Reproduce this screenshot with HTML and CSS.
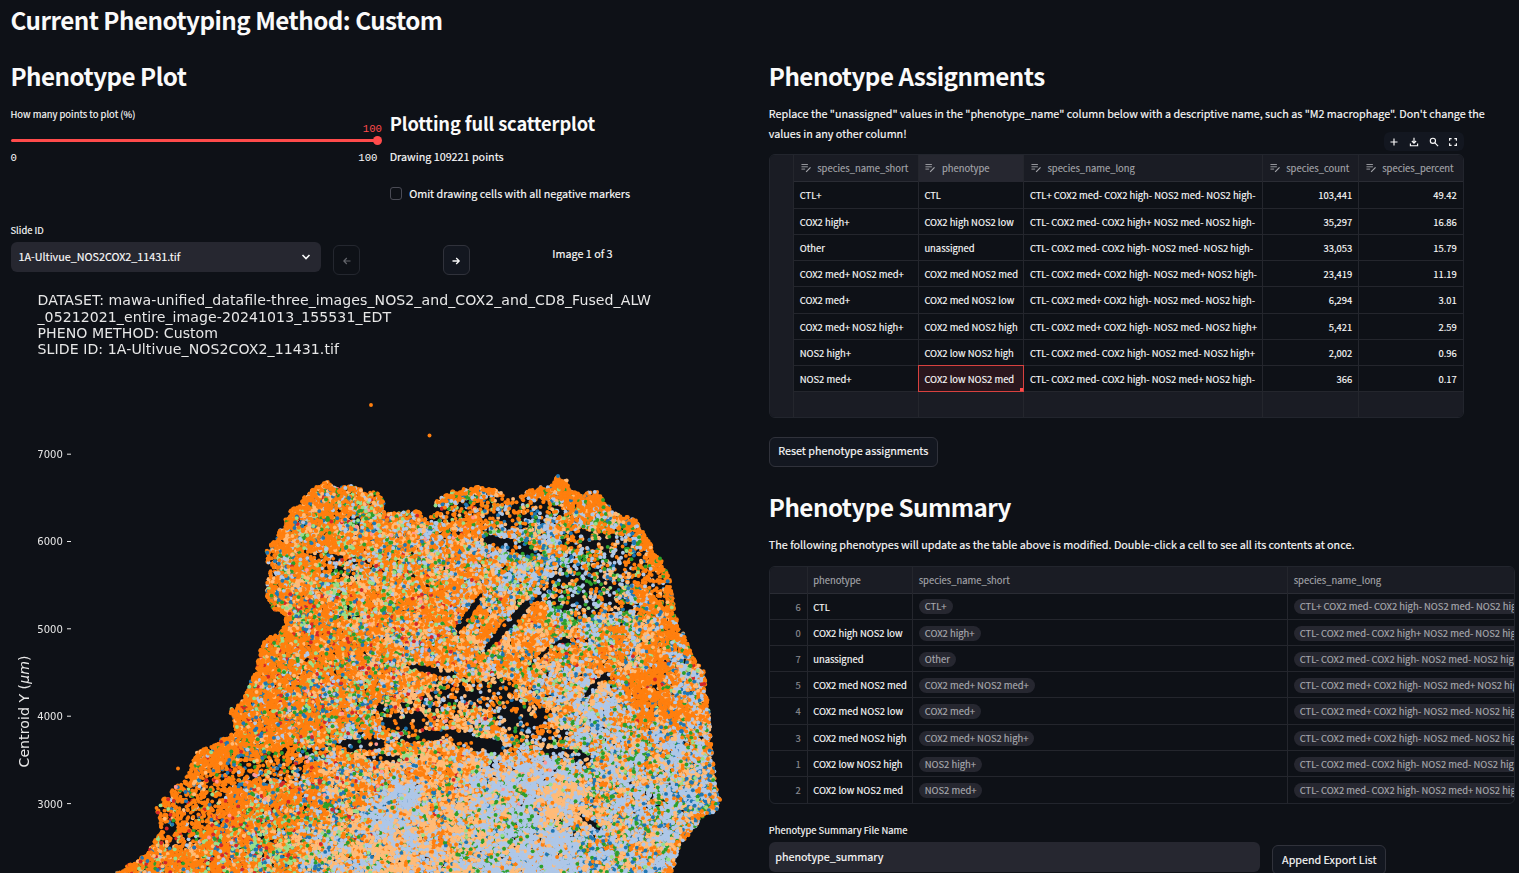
FILE: index.html
```html
<!DOCTYPE html>
<html lang="en">
<head>
<meta charset="utf-8">
<title>Phenotyping</title>
<link rel="stylesheet" href="styles.css">
</head>
<body>
<svg class="defs" width="0" height="0" aria-hidden="true">
  <symbol id="edit" viewBox="0 0 12 10"><path d="M.5 1.2h7M.5 3.7h7M.5 6.2h4" fill="none" stroke="currentColor" stroke-width="1"/><path d="M5.6 9.2 10.4 4.4" fill="none" stroke="currentColor" stroke-width="1.3"/></symbol>
</svg>
<h1 class="title">Current Phenotyping Method: Custom</h1>
<main class="columns">
  <section class="left">
    <h2>Phenotype Plot</h2>
    <div class="controls">
      <div class="slider">
        <div class="label">How many points to plot (%)</div>
        <div class="slider-value">100</div>
        <div class="track"><i class="thumb"></i></div>
        <div class="range"><span>0</span><span>100</span></div>
      </div>
      <div class="plot-info">
        <h3>Plotting full scatterplot</h3>
        <p class="drawing">Drawing 109221 points</p>
        <label class="check"><i class="box"></i><span>Omit drawing cells with all negative markers</span></label>
      </div>
    </div>
    <div class="label slide-label">Slide ID</div>
    <div class="slide-row">
      <div class="select"><span>1A-Ultivue_NOS2COX2_11431.tif</span>
        <svg width="10" height="8" viewBox="0 0 10 8"><path d="M1.5 2 5 5.5 8.5 2" fill="none" stroke="#fafafa" stroke-width="1.6"/></svg></div>
      <button class="arrow off"><svg width="10" height="10" viewBox="0 0 10 10"><path d="M8.5 5H2M4.8 2 1.8 5l3 3" fill="none" stroke="currentColor" stroke-width="1.1"/></svg></button>
      <button class="arrow next"><svg width="10" height="10" viewBox="0 0 10 10"><path d="M1.5 5H8M5.2 2l3 3-3 3" fill="none" stroke="currentColor" stroke-width="1.3"/></svg></button>
      <span class="count">Image 1 of 3</span>
    </div>
    <div class="figure">
      <canvas id="scatter" width="740" height="583"></canvas>
      <svg class="axes" width="740" height="583" viewBox="0 290 740 583">
        <g class="fig-title">
          <text x="37.5" y="305.3" textLength="613.5">DATASET: mawa-unified_datafile-three_images_NOS2_and_COX2_and_CD8_Fused_ALW</text>
          <text x="37.5" y="321.6" textLength="353.5">_05212021_entire_image-20241013_155531_EDT</text>
          <text x="37.5" y="338" textLength="180.5">PHENO METHOD: Custom</text>
          <text x="37.5" y="354.2" textLength="301.5">SLIDE ID: 1A-Ultivue_NOS2COX2_11431.tif</text>
        </g>
        <g class="ticks">
          <text x="37.3" y="458">7000</text><text x="37.3" y="545.3">6000</text><text x="37.3" y="632.7">5000</text><text x="37.3" y="720">4000</text><text x="37.3" y="807.5">3000</text>
          <path d="M67 454.2h4M67 541.5h4M67 628.8h4M67 716.2h4M67 803.6h4" stroke="#e8e8e8" stroke-width="1"/>
        </g>
        <text class="ylabel" transform="translate(29.3 767.5) rotate(-90)" textLength="112">Centroid Y (<tspan class="mu">μm</tspan>)</text>
      </svg>
    </div>
  </section>

  <section class="right">
    <h2>Phenotype Assignments</h2>
    <p class="intro">Replace the "unassigned" values in the "phenotype_name" column below with a descriptive name, such as "M2 macrophage". Don't change the<br>values in any other column!</p>
    <div class="grid-wrap">
      <div class="toolbar">
        <svg viewBox="0 0 12 12"><path d="M6 2.5v7M2.5 6h7" /></svg>
        <svg viewBox="0 0 12 12"><path d="M6 1.8v5.2M3.9 5 6 7.1 8.1 5M2.4 7.4v2.3h7.2V7.4" /></svg>
        <svg viewBox="0 0 12 12"><circle cx="4.9" cy="4.8" r="2.6"/><path d="m6.9 6.9 3.2 3.2" /></svg>
        <svg viewBox="0 0 12 12"><path d="M2.6 4.8V2.6h2M7.4 2.6h2v2.2M9.4 7.2v2.2h-2M4.6 9.4h-2V7.2" /></svg>
      </div>
      <div class="table assign">
        <div class="row head"><span></span><span><svg class="e"><use href="#edit"/></svg>species_name_short</span><span class="hot"><svg class="e"><use href="#edit"/></svg>phenotype</span><span><svg class="e"><use href="#edit"/></svg>species_name_long</span><span><svg class="e"><use href="#edit"/></svg>species_count</span><span><svg class="e"><use href="#edit"/></svg>species_percent</span></div>
        <div class="row"><span></span><span>CTL+</span><span>CTL</span><span>CTL+ COX2 med- COX2 high- NOS2 med- NOS2 high-</span><span>103,441</span><span>49.42</span></div>
        <div class="row"><span></span><span>COX2 high+</span><span>COX2 high NOS2 low</span><span>CTL- COX2 med- COX2 high+ NOS2 med- NOS2 high-</span><span>35,297</span><span>16.86</span></div>
        <div class="row"><span></span><span>Other</span><span>unassigned</span><span>CTL- COX2 med- COX2 high- NOS2 med- NOS2 high-</span><span>33,053</span><span>15.79</span></div>
        <div class="row"><span></span><span>COX2 med+ NOS2 med+</span><span>COX2 med NOS2 med</span><span>CTL- COX2 med+ COX2 high- NOS2 med+ NOS2 high-</span><span>23,419</span><span>11.19</span></div>
        <div class="row"><span></span><span>COX2 med+</span><span>COX2 med NOS2 low</span><span>CTL- COX2 med+ COX2 high- NOS2 med- NOS2 high-</span><span>6,294</span><span>3.01</span></div>
        <div class="row"><span></span><span>COX2 med+ NOS2 high+</span><span>COX2 med NOS2 high</span><span>CTL- COX2 med+ COX2 high- NOS2 med- NOS2 high+</span><span>5,421</span><span>2.59</span></div>
        <div class="row"><span></span><span>NOS2 high+</span><span>COX2 low NOS2 high</span><span>CTL- COX2 med- COX2 high- NOS2 med- NOS2 high+</span><span>2,002</span><span>0.96</span></div>
        <div class="row"><span></span><span>NOS2 med+</span><span class="selected">COX2 low NOS2 med</span><span>CTL- COX2 med- COX2 high- NOS2 med+ NOS2 high-</span><span>366</span><span>0.17</span></div>
        <div class="row blank"><span></span><span></span><span></span><span></span><span></span><span></span></div>
      </div>
    </div>
    <button class="btn reset">Reset phenotype assignments</button>
    <h2 class="summary">Phenotype Summary</h2>
    <p class="note">The following phenotypes will update as the table above is modified. Double-click a cell to see all its contents at once.</p>
    <div class="table sums">
      <div class="row head"><span></span><span>phenotype</span><span>species_name_short</span><span>species_name_long</span></div>
      <div class="row"><span>6</span><span>CTL</span><span><b>CTL+</b></span><span><b>CTL+ COX2 med- COX2 high- NOS2 med- NOS2 high-</b></span></div>
      <div class="row"><span>0</span><span>COX2 high NOS2 low</span><span><b>COX2 high+</b></span><span><b>CTL- COX2 med- COX2 high+ NOS2 med- NOS2 high-</b></span></div>
      <div class="row"><span>7</span><span>unassigned</span><span><b>Other</b></span><span><b>CTL- COX2 med- COX2 high- NOS2 med- NOS2 high-</b></span></div>
      <div class="row"><span>5</span><span>COX2 med NOS2 med</span><span><b>COX2 med+ NOS2 med+</b></span><span><b>CTL- COX2 med+ COX2 high- NOS2 med+ NOS2 high-</b></span></div>
      <div class="row"><span>4</span><span>COX2 med NOS2 low</span><span><b>COX2 med+</b></span><span><b>CTL- COX2 med+ COX2 high- NOS2 med- NOS2 high-</b></span></div>
      <div class="row"><span>3</span><span>COX2 med NOS2 high</span><span><b>COX2 med+ NOS2 high+</b></span><span><b>CTL- COX2 med+ COX2 high- NOS2 med- NOS2 high+</b></span></div>
      <div class="row"><span>1</span><span>COX2 low NOS2 high</span><span><b>NOS2 high+</b></span><span><b>CTL- COX2 med- COX2 high- NOS2 med- NOS2 high+</b></span></div>
      <div class="row"><span>2</span><span>COX2 low NOS2 med</span><span><b>NOS2 med+</b></span><span><b>CTL- COX2 med- COX2 high- NOS2 med+ NOS2 high-</b></span></div>
    </div>
    <div class="label file-label">Phenotype Summary File Name</div>
    <div class="file-row">
      <div class="input">phenotype_summary</div>
      <button class="btn append">Append Export List</button>
    </div>
  </section>
</main>
<script src="scatter.js"></script>
</body>
</html>
```
FILE: styles.css
```css
* { box-sizing: border-box; }
body {
  margin: 0;
  height: 873px;
  overflow: hidden;
  background: #0e1117;
  color: #fafafa;
  font-family: "Noto Sans CJK SC", "Noto Sans", sans-serif;
  font-size: 10.78px;
  line-height: 19.6px;
  -webkit-text-stroke: .15px currentColor;
}
.defs { position: absolute; }
h1, h2, h3, p { margin: 0; white-space: nowrap; }
h1, h2, h3, .axes, .slider { -webkit-text-stroke: 0; }
h1, h2 { height: 34px; font-size: 24.2px; font-weight: 600; line-height: 32px; letter-spacing: -.52px; }
.title { height: 60px; padding: 4px 0 0 10.5px; }
.columns { display: grid; grid-template-columns: 768.8px 1fr; }
.left, .right { min-width: 0; }
.left > h2, .left > .label, .slide-row, .controls { margin-left: 10.5px; }
.label { font-size: 9.43px; line-height: 18px; white-space: nowrap; -webkit-text-stroke: .15px currentColor; }
.controls { display: grid; grid-template-columns: 371.5px 1fr; column-gap: 7.7px; margin-top: 11px; height: 116px; }
.slider-value, .range { font: 10.7px/12px "Liberation Mono", monospace; }
.slider-value { color: #ff4b4b; text-align: right; height: 16px; }
.track { width: 367px; height: 3px; border-radius: 2px; background: #ff4b4b; position: relative; }
.thumb { position: absolute; right: -4.5px; top: -3px; width: 9px; height: 9px; border-radius: 50%; background: #ff4b4b; }
.range { display: flex; justify-content: space-between; width: 367px; margin-top: 10px; }
h3 { font-size: 18.3px; font-weight: 600; line-height: 26px; margin-top: 5px; letter-spacing: -.13px; }
.drawing { margin-top: 11px; }
.check { display: flex; align-items: center; gap: 7px; margin-top: 17px; white-space: nowrap; }
.box { width: 12.5px; height: 12.5px; border: 1px solid #4a4b55; border-radius: 3px; }
.slide-row { display: flex; align-items: flex-start; margin-top: 3px; height: 48px; }
.select { display: flex; justify-content: space-between; align-items: center; width: 310.5px; height: 30px; padding: 0 10px 0 8px; border-radius: 6px; background: #262730; }
.arrow { display: grid; place-items: center; width: 27px; height: 30px; margin: 3px 0 0 12.3px; padding: 0; border: 1px solid #30323b; border-radius: 6px; background: #131720; color: #fafafa; }
.arrow.off { color: #65676d; background: transparent; border-color: #24272f; }
.arrow svg { position: relative; top: .7px; }
.arrow.next { margin-left: 82.5px; }
.count { margin: 2px 0 0 82.5px; }
.figure { display: grid; width: 740px; height: 583px; }
.figure > * { grid-area: 1 / 1; display: block; }
.axes { font-family: "DejaVu Sans", sans-serif; fill: #e8e8e8; }
.fig-title { font-size: 14.1px; }
.ticks { font-size: 10px; }
.ylabel { font-size: 14.1px; }
.mu { font-style: italic; }

.intro { margin-top: 10px; }
.grid-wrap { position: relative; width: 695px; margin-top: 11.2px; }
.toolbar { position: absolute; right: 0; top: -22.5px; display: flex; align-items: center; gap: 7.7px; height: 19.5px; padding: 0 4.5px; border-radius: 6px; background: #131720; }
.toolbar svg { width: 12px; height: 12px; fill: none; stroke: #fafafa; stroke-width: 1.15; }
.table { border: 1px solid #22252d; border-radius: 6px; overflow: hidden; font-size: 9.43px; white-space: nowrap; }
.row { display: grid; height: 26.24px; line-height: 26.4px; border-bottom: 1px solid #24262d; }
.row:last-child { border-bottom: 0; }
.row > span { min-width: 0; height: 26.24px; padding: 0 6px 0 5.4px; border-right: 1px solid #24262d; }
.row > span:last-child { border-right: 0; }
.row.head { background: #1a1c24; color: #a3a4a9; border-bottom-color: #2a2c34; }
.assign { width: 695px; height: 264px; }
.assign .head { height: 27px; line-height: 27px; }
.assign .row { grid-template-columns: 24.5px 124.7px 105.5px 238.8px 96px 1fr; }
.assign .row > span:first-child, .blank { background: #1a1c24; }
.assign .row > span:nth-child(n+5) { text-align: right; }
.assign .head > span { display: flex; align-items: center; padding-left: 6.4px; }
.assign .head .hot { background: #262730; }
.assign .row > .selected { position: relative; height: 27.24px; margin: -1px 0 -1px -1px; border: 1px solid #d8413f; background: #2a161d; }
.selected::after { content: ""; position: absolute; right: 0; bottom: 0; width: 3px; height: 3px; background: #ff4b4b; }
.e { width: 11px; height: 10px; margin-right: 5.5px; flex: none; }
.btn { display: block; height: 30px; padding: 0 0 1px; border: 1px solid #30323b; border-radius: 6px; background: #131720; color: #fafafa; font: inherit; white-space: nowrap; }
.reset { width: 169px; margin-top: 18.3px; }
.summary { margin-top: 24px; }
.note { margin-top: 10px; }
.sums { width: 746.5px; height: 237.5px; margin-top: 12px; }
.sums .row { grid-template-columns: 38px 105.5px 375px 1fr; }
.sums .row > span { overflow: hidden; }
.sums .row:not(.head) > span:first-child { text-align: right; color: #8b8c92; }
.sums b { display: inline-block; height: 15px; line-height: 15px; padding: 0 6px; border-radius: 8px; background: #262730; color: #a8a9ae; font-weight: 400; vertical-align: middle; margin-top: -2px; }
.file-label { margin-top: 17.5px; }
.file-row { display: flex; align-items: flex-start; gap: 12px; margin-top: 3px; }
.input { width: 491.5px; height: 30px; padding: 0 6.5px; line-height: 29px; border-radius: 6px; background: #262730; }
.append { width: 114px; margin-top: 3px; }
```
FILE: scatter.js
```js
// Cell positions and phenotypes of the tissue section, in page pixels.
const ctx = document.getElementById('scatter').getContext('2d');
let seed = 12345;
const rnd = () => {
  seed = (seed + 0x6D2B79F5) | 0;
  let t = Math.imul(seed ^ (seed >>> 15), 1 | seed);
  t = (t + Math.imul(t ^ (t >>> 7), 61 | t)) ^ t;
  return ((t ^ (t >>> 14)) >>> 0) / 4294967296;
};
const hash = (x, y, k) => {
  const s = Math.sin(x * 127.1 + y * 311.7 + k * 74.7) * 43758.5453;
  return s - Math.floor(s);
};
const noise = (x, y, k) => {
  const i = Math.floor(x), j = Math.floor(y), f = x - i, g = y - j;
  const u = f * f * (3 - 2 * f), v = g * g * (3 - 2 * g);
  return (hash(i, j, k) * (1 - u) + hash(i + 1, j, k) * u) * (1 - v) +
         (hash(i, j + 1, k) * (1 - u) + hash(i + 1, j + 1, k) * u) * v;
};
const outline = [[110,880],[118,870],[140,857],[151,845],[159,830],[154,808],[169,792],[186,775],[196,751],[216,741],[222,737],[235,731],[232,720],[227,710],[239,703],[245,690],[253,672],[258,650],[264,640],[284,625],[285,616],[272,610],[264,592],[268,575],[265,555],[266,547],[274,540],[282,522],[291,508],[299,504],[307,490],[326,479],[340,486],[350,484],[368,491],[378,491],[385,500],[384,511],[400,512],[418,509],[428,519],[433,510],[436,498],[455,489],[472,487],[485,484],[500,489],[510,496],[535,487],[550,484],[558,474],[568,480],[573,491],[590,491],[602,491],[606,502],[618,512],[636,519],[647,535],[663,560],[673,582],[676,615],[685,635],[693,655],[705,670],[711,720],[713,750],[717,785],[721,800],[719,811],[701,821],[691,834],[681,846],[678,860],[670,880]];
const path = new Path2D();
outline.forEach(([x, y], i) => i ? path.lineTo(x, y) : path.moveTo(x, y));
path.closePath();
const edge = (x, y) => {
  let d = 1e9;
  for (let i = 1; i < outline.length; i++) {
    const [a, b] = outline[i - 1], [c, e] = outline[i];
    const t = Math.max(0, Math.min(1, ((x - a) * (c - a) + (y - b) * (e - b)) / ((c - a) ** 2 + (e - b) ** 2)));
    d = Math.min(d, Math.hypot(x - a - t * (c - a), y - b - t * (e - b)));
  }
  return d;
};
// Sparse tissue: x, y, rx, ry, rotation in degrees, strength
const gaps = [[470,612,3.5,20,32,1],[507,626,4.5,30,43,1],[548,586,4,18,40,.8],[590,585,36,26,-20,.5],[572,603,16,8,0,.7],[625,560,26,16,50,.6],[585,540,20,9,0,.6],[510,545,26,6,15,.75],[455,512,26,8,-10,.5],[515,512,34,14,0,.55],[545,510,20,8,0,.45],[655,585,8,16,-20,.5],[433,671,22,3.5,12,1],[470,695,38,14,0,.5],[498,688,16,9,0,.7],[420,712,40,12,0,.42],[405,722,22,9,0,.75],[430,736,34,5,-5,.85],[480,744,30,7,12,.85],[520,718,26,15,10,.62],[565,753,24,5,10,.8],[540,735,25,8,0,.45],[596,685,4,15,45,.9],[545,652,2.5,18,50,.7],[385,712,14,7,0,.5],[362,744,24,5,0,.85],[382,758,16,3,0,.8],[335,558,30,4,8,.5],[340,572,18,8,20,.35],[355,520,6,4,0,.5],[290,760,34,12,-15,.38],[235,775,30,10,-20,.4],[200,800,24,26,0,.38],[180,825,22,22,0,.42],[280,773,26,10,0,.45],[590,822,14,3,35,.7],[640,795,24,8,30,.25],[575,640,20,4,0,.3],[605,610,28,4,-8,.7],[273,562,4,12,0,.5]];
const sparse = (x, y) => {
  let s = 0;
  for (const [a, b, rx, ry, r, w] of gaps) {
    const t = r * Math.PI / 180, dx = x - a, dy = y - b;
    const u = (dx * Math.cos(t) + dy * Math.sin(t)) / rx, v = (-dx * Math.sin(t) + dy * Math.cos(t)) / ry;
    const q = u * u + v * v;
    if (q < 2) s = Math.max(s, w * Math.min(1, 1.6 - q * .8));
  }
  return s;
};
// orange, peach, light blue, green, light green, blue, red, pink
const colors = ['#ff7f0e', '#ffbb78', '#aec7e8', '#2ca02c', '#98df8a', '#1f77b4', '#d62728', '#ff9896'];
// x, y, radius, mixture of the eight phenotypes
const fields = [
  [330,500,40,[72,8,5,6,4,5,1,1]],[300,560,30,[60,12,9,7,7,6,1,1]],[370,570,45,[40,28,12,6,7,4,2,1]],
  [350,590,30,[42,22,10,6,14,4,2,0]],[290,620,35,[66,10,5,6,5,7,3,1]],[330,670,50,[68,10,6,5,5,5,3,1]],
  [400,640,45,[44,24,12,5,5,6,3,1]],[260,720,50,[76,5,4,4,3,6,2,1]],[200,800,50,[82,4,3,2,2,4,3,1]],
  [180,860,40,[72,6,4,2,8,3,6,1]],[270,850,35,[42,14,8,7,18,7,4,0]],[290,800,30,[66,10,6,5,5,6,3,1]],
  [350,710,35,[44,16,18,7,6,8,2,1]],[350,790,35,[42,22,15,5,6,8,3,1]],[340,850,35,[24,32,22,8,6,9,1,0]],
  [450,540,40,[36,24,22,7,4,6,1,1]],[475,500,35,[68,8,12,5,3,4,0,0]],[570,490,30,[80,5,7,3,1,3,0,0]],
  [540,550,35,[18,14,42,12,4,10,0,0]],[600,550,35,[28,16,36,11,3,6,0,0]],[510,580,28,[18,15,42,9,5,11,0,0]],
  [470,590,25,[64,15,8,4,2,5,2,0]],[590,600,35,[14,16,44,16,4,6,0,0]],[525,630,30,[54,24,12,3,3,4,1,0]],
  [655,560,30,[85,4,4,3,1,3,0,0]],[665,610,25,[76,7,9,4,1,3,0,0]],[630,630,25,[42,22,20,8,2,6,0,0]],
  [650,695,26,[90,4,2,1,0,2,1,0]],[610,665,28,[55,20,14,4,2,4,1,0]],[560,680,30,[22,24,38,7,3,6,1,0]],
  [685,690,18,[18,22,44,5,3,8,1,0]],[450,660,30,[50,24,12,5,2,6,1,1]],[450,720,45,[38,42,10,5,3,2,2,1]],
  [520,700,35,[46,28,15,4,3,3,1,0]],[520,740,30,[28,26,32,8,2,3,0,0]],[400,755,25,[28,48,12,5,4,3,2,1]],
  [440,770,28,[44,38,8,4,3,3,2,0]],[400,795,22,[3,5,90,1,1,1,0,0]],[385,820,28,[3,12,82,1,1,1,0,0]],
  [440,800,20,[24,40,18,7,4,6,1,0]],[450,830,24,[20,50,18,7,2,3,1,0]],[530,770,26,[3,14,82,1,0,0,0,1]],
  [500,800,28,[5,24,64,4,1,1,0,1]],[565,805,25,[4,65,26,2,1,2,0,0]],[510,825,20,[3,14,48,32,1,2,0,0]],
  [545,850,28,[3,10,84,1,1,1,0,0]],[480,850,30,[8,28,54,7,1,2,0,0]],[600,710,28,[12,16,62,6,2,4,0,0]],
  [610,760,40,[17,22,48,8,2,4,0,0]],[600,820,25,[14,40,28,10,2,8,0,0]],[670,750,28,[12,18,60,4,2,6,0,0]],
  [695,790,25,[14,14,45,8,2,18,0,0]],[650,820,35,[9,16,61,8,1,5,0,0]],[610,860,30,[10,22,52,7,1,8,0,0]],
  [655,860,20,[20,16,52,6,1,5,0,0]],[390,855,22,[12,56,27,2,1,2,0,0]],[430,860,22,[14,46,36,2,1,1,0,0]],
  [345,860,25,[9,28,50,5,3,6,0,0]],[675,720,18,[52,22,16,3,1,4,1,0]],[420,580,25,[54,18,12,5,5,4,3,0]]
];
const dot = (x, y, c) => {
  ctx.fillStyle = c;
  ctx.beginPath();
  ctx.arc(x, y, 1.95, 0, 7);
  ctx.fill();
};
for (let n = 0; n < 110000; n++) {
  const x = 105 + rnd() * 620, y = 474 + rnd() * 402;
  ctx.setTransform(1, 0, 0, 1, 0, 0);
  if (!ctx.isPointInPath(path, x, y)) continue;
  ctx.setTransform(1, 0, 0, 1, 0, -290);
  const d = edge(x, y);
  // The rim is ragged: individual cells project from the tissue
  if (d < .8 + 4 * noise(x / 4, y / 4, 5) ** 2) continue;
  const s = sparse(x, y);
  const rough = noise(x / 6, y / 6, 1) * .4 + noise(x / 3, y / 3, 2) * .6;
  const upper = y < 770 ? .23 : x < 330 ? .21 : x > 570 ? .12 : 0;
  if (rough < s * .36 + upper) continue;
  if (rnd() > Math.exp(-2.5 * s)) continue;
  const m = [0, 0, 0, 0, 0, 0, 0, 0];
  for (const [a, b, r, w] of fields) {
    const q = ((x - a) ** 2 + (y - b) ** 2) / (r * r);
    if (q > 9) continue;
    const g = Math.exp(-q * 1.8);
    for (let k = 0; k < 8; k++) m[k] += g * w[k];
  }
  const total = m.reduce((a, b) => a + b, 0) || 1;
  for (let k = 0; k < 8; k++) {
    const v = noise(x / 9, y / 9, 10 + k);
    m[k] = m[k] / total * (k < 3 ? .15 + 3.2 * v * v : .35 + 1.6 * v);
  }
  if (d < 9) m[0] += x < 690 || y < 760 ? 1.1 * (1 - d / 9) : .3;
  let pick = rnd() * m.reduce((a, b) => a + b, 0), k = 0;
  while (k < 7 && (pick -= m[k]) > 0) k++;
  dot(x, y, colors[k]);
}
ctx.setTransform(1, 0, 0, 1, 0, -290);
dot(371, 405, colors[0]);
dot(429.5, 435.5, colors[0]);
dot(178, 768.5, colors[0]);
dot(558, 476, colors[5]);
```
